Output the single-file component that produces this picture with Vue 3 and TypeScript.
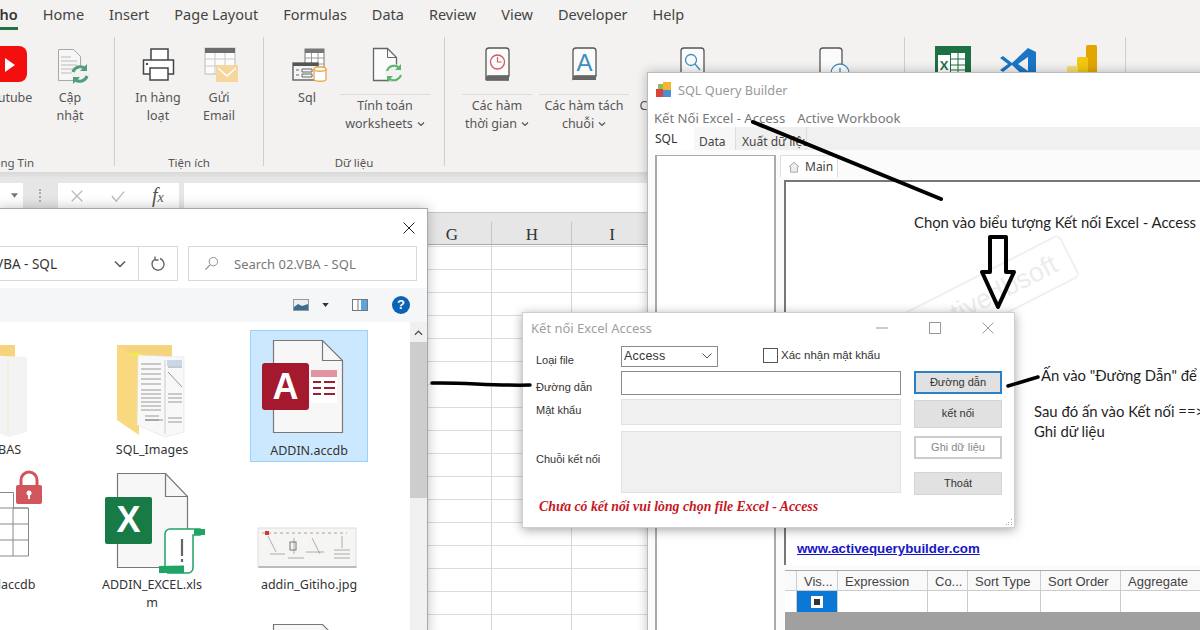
<script setup lang="ts">
const excelCols: string[] = ['G', 'H', 'I']
const gridHead: string[] = ['', 'Vis...', 'Expression', 'Co...', 'Sort Type', 'Sort Order', 'Aggregate']
</script>

<template>
  <div class="page">
    <div class="excel">
      <div class="tabs">
        <span class="tab tab-on">Gitiho</span>
        <span class="tab">Home</span>
        <span class="tab">Insert</span>
        <span class="tab">Page Layout</span>
        <span class="tab">Formulas</span>
        <span class="tab">Data</span>
        <span class="tab">Review</span>
        <span class="tab">View</span>
        <span class="tab">Developer</span>
        <span class="tab">Help</span>
      </div>
      <div class="ribbon">
        <div class="group g1">
          <div class="items">
            <div class="item w90">
              <svg class="ic" viewBox="0 0 50 45"><rect x="-6" y="2" width="53" height="36" rx="8" fill="#f40f0f"/><path d="M25 14l10 7-10 7z" fill="#fff"/></svg>
              <div class="lbl yt-lbl">Youtube</div>
            </div>
            <div class="item w40">
              <svg class="ic" viewBox="0 0 50 45"><path d="M13.500 5.500h15l7 7v24h-22z" fill="#f6f6f6" stroke="#a8a8a8"/><path d="M16 13h10M16 17h16M16 21h16M16 25h14M16 29h12" stroke="#bbb"/><circle cx="35" cy="30" r="8.500" fill="#f3f2f1"/><path d="M28 28a7.500 7.500 0 0 1 12-3.500M42 32a7.500 7.500 0 0 1-12 3.500" fill="none" stroke="#4f9e7c" stroke-width="3"/><path d="M42 20v7h-7zM28 40v-7h7z" fill="#4f9e7c"/></svg>
              <div class="lbl">Cập<br>nhật</div>
            </div>
          </div>
          <div class="gname gn1">Thông Tin</div>
        </div>
        <div class="group g2">
          <div class="items">
            <div class="item w60">
              <svg class="ic" viewBox="0 0 50 45"><path d="M18 16V5h17v11M18 30h-7.500V16h30v14H35" fill="#fff" stroke="#444" stroke-width="1.500"/><rect x="17" y="24" width="18" height="12" fill="#fff" stroke="#444" stroke-width="1.500"/><rect x="13" y="19" width="2" height="2" fill="#444"/></svg>
              <div class="lbl">In hàng<br>loạt</div>
            </div>
            <div class="item w60">
              <svg class="ic" viewBox="0 0 50 45"><rect x="11" y="4" width="30" height="26" fill="#fbfbfb" stroke="#bbb"/><rect x="11" y="4" width="30" height="5" fill="#6c6c6c"/><path d="M11 15h30M11 22h30M21 9v21M31 9v21" stroke="#c9c9c9"/><rect x="22" y="21" width="22" height="17" fill="#f6d69c"/><path d="M24 24l9 8 9-8" fill="none" stroke="#fff" stroke-width="1.500"/></svg>
              <div class="lbl">Gửi<br>Email</div>
            </div>
          </div>
          <div class="gname gn2">Tiện ích</div>
        </div>
        <div class="group g3">
          <div class="items">
            <div class="item w60">
              <svg class="ic" viewBox="0 0 50 45"><rect x="23" y="5" width="19" height="22" fill="#fff" stroke="#777"/><rect x="23" y="5" width="19" height="4" fill="#777"/><path d="M23 14h19M23 20h19M29.500 9v18M36 9v18" stroke="#999"/><rect x="11" y="19" width="25" height="17" fill="#f4f4f4" stroke="#555" stroke-width="1.300"/><rect x="11" y="19" width="25" height="3" fill="#555"/><path d="M14 26h3M14 31h3M20 25h10v3H20zM20 30h10v3H20z" fill="none" stroke="#666"/><path d="M32 25c0-3 12-3 12 0v10c0 3-12 3-12 0z" fill="#fff" stroke="#eea64a" stroke-width="1.300"/><path d="M32 25c0 3 12 3 12 0" fill="none" stroke="#eea64a" stroke-width="1.300"/></svg>
              <div class="lbl">Sql</div>
            </div>
            <div class="item w90">
              <svg class="ic" viewBox="0 0 50 45"><path d="M13.500 4.500h14l9 9v23h-23z" fill="#fbfbfb" stroke="#666" stroke-width="1.300"/><path d="M27.500 4.500v9h9" fill="none" stroke="#666"/><circle cx="34" cy="29" r="9" fill="#f3f2f1"/><path d="M27 27a7.500 7.500 0 0 1 12-3.500M41 31a7.500 7.500 0 0 1-12 3.500" fill="none" stroke="#5ab56a" stroke-width="2"/><path d="M41 20v6h-6zM27 38v-6h6z" fill="#5ab56a"/></svg>
              <div class="sep"></div>
              <div class="lbl">Tính toán<br>worksheets<svg class="chev" viewBox="0 0 8 6"><path d="M1 1.500l3 3 3-3" fill="none" stroke="#555" stroke-width="1.200"/></svg></div>
            </div>
          </div>
          <div class="gname gn2">Dữ liệu</div>
        </div>
        <div class="group g4">
          <div class="items">
            <div class="item w70">
              <svg class="ic" viewBox="0 0 50 45"><path d="M14 36V7a3 3 0 0 1 3-3h17a3 3 0 0 1 3 3v25H17a3 3 0 0 0-3 4zM14 36h23" fill="#fbfbfb" stroke="#555" stroke-width="1.300"/><rect x="14" y="32" width="23" height="4" fill="#666"/><circle cx="25.500" cy="18" r="7" fill="none" stroke="#cf5b63" stroke-width="1.300"/><path d="M25.500 13v5h4" fill="none" stroke="#cf5b63" stroke-width="1.200"/></svg>
              <div class="sep"></div>
              <div class="lbl">Các hàm<br>thời gian<svg class="chev" viewBox="0 0 8 6"><path d="M1 1.500l3 3 3-3" fill="none" stroke="#555" stroke-width="1.200"/></svg></div>
            </div>
            <div class="item w90">
              <svg class="ic" viewBox="0 0 50 45"><path d="M14 36V7a3 3 0 0 1 3-3h17a3 3 0 0 1 3 3v25H17a3 3 0 0 0-3 4z" fill="#fbfbfb" stroke="#555" stroke-width="1.300"/><rect x="14" y="32" width="23" height="4" fill="#666"/><text x="25.500" y="27" class="bookA">A</text></svg>
              <div class="sep"></div>
              <div class="lbl">Các hàm tách<br>chuỗi<svg class="chev" viewBox="0 0 8 6"><path d="M1 1.500l3 3 3-3" fill="none" stroke="#555" stroke-width="1.200"/></svg></div>
            </div>
            <div class="item w120">
              <svg class="ic" viewBox="0 0 50 45"><path d="M14 36V7a3 3 0 0 1 3-3h17a3 3 0 0 1 3 3v25H17a3 3 0 0 0-3 4z" fill="#fbfbfb" stroke="#555" stroke-width="1.300"/><circle cx="24" cy="16" r="5.500" fill="none" stroke="#3a8fc0" stroke-width="1.300"/><path d="M28 20l5 6" stroke="#3a8fc0" stroke-width="1.300"/></svg>
              <div class="sep short"></div>
              <div class="lbl">Các hàm tìm kiếm</div>
            </div>
            <div class="item w120">
              <svg class="ic" viewBox="0 0 50 45"><path d="M15 36V7a3 3 0 0 1 3-3h16a3 3 0 0 1 3 3v25" fill="#fbfbfb" stroke="#555" stroke-width="1.300"/><circle cx="35" cy="29" r="9" fill="#fff" stroke="#3a8fc0" stroke-width="1.300"/><path d="M35 24v5" stroke="#3a8fc0" stroke-width="1.300"/></svg>
            </div>
          </div>
        </div>
        <div class="group g5">
          <div class="items">
            <div class="item w50">
              <svg class="ic" viewBox="0 0 50 45"><rect x="8" y="2" width="36" height="42" fill="#1e7145"/><rect x="24" y="9" width="14" height="22" fill="#fff"/><path d="M31 9v22M24 15h14M24 21h14M24 26h14" stroke="#1e7145"/><rect x="11" y="11" width="12" height="20" fill="#fff"/><text x="17" y="26" class="xmark">X</text></svg>
            </div>
            <div class="item w50">
              <svg class="ic" viewBox="0 0 50 45"><path fill-rule="evenodd" d="M34 4L18 19 9 12l-3 2 8 6-8 6 3 2 9-7 16 15 8-4V8zM34 13v14L24 20z" fill="#1a76c4"/></svg>
            </div>
            <div class="item w50">
              <svg class="ic" viewBox="0 0 50 45"><rect x="31" y="1" width="11" height="40" rx="1.500" fill="#e3a600"/><rect x="22" y="13" width="11" height="30" rx="1.500" fill="#f2c811"/><rect x="12" y="22" width="11" height="20" rx="1.500" fill="#f6dc72"/></svg>
            </div>
          </div>
        </div>
      </div>

      <div class="fbar">
        <div class="namebox"><svg class="nbcaret" viewBox="0 0 8 5"><path d="M0 0h8L4 5z" fill="#777"/></svg></div>
        <div class="dots"></div>
        <div class="fxbox">
          <svg class="fxic" viewBox="0 0 16 16"><path d="M2 2l12 12M14 2L2 14" stroke="#bbb" stroke-width="1.500"/></svg>
          <svg class="fxic" viewBox="0 0 16 16"><path d="M1 8l5 6L15 3" fill="none" stroke="#bbb" stroke-width="1.500"/></svg>
          <span class="fx">f<small>x</small></span>
        </div>
        <div class="fbox"></div>
      </div>
      <div class="colhead">
        <div v-for="c in excelCols" :key="c" class="colcell">{{ c }}</div>
      </div>
      <div class="cells">
        <div v-for="c in excelCols" :key="c" class="cellcol"></div>
      </div>
    </div>

    <!-- File explorer window -->
    <section class="explorer">
      <div class="ex-title"><svg class="ex-x" viewBox="0 0 12 12"><path d="M.5.500l11 11M11.500.500l-11 11" stroke="#222" stroke-width="1"/></svg></div>
      <div class="ex-nav">
        <div class="ex-addr">
          <span class="ex-path">Excel &gt; 02.VBA - SQL</span>
          <svg class="ex-chev" viewBox="0 0 12 8"><path d="M1 1.500l5 5 5-5" fill="none" stroke="#555" stroke-width="1.500"/></svg>
          <div class="ex-ref"><svg viewBox="0 0 16 16" width="16" height="16"><path d="M5 3a6 6 0 1 0 5-.500M5 .500V4h3.500" fill="none" stroke="#666" stroke-width="1.400"/></svg></div>
        </div>
        <div class="ex-search">
          <svg viewBox="0 0 16 16" width="15" height="15"><circle cx="10" cy="6" r="4.500" fill="none" stroke="#888"/><path d="M6.500 9.500L1.500 14.500" stroke="#888" stroke-width="1.200"/></svg>
          <span>Search 02.VBA - SQL</span>
        </div>
      </div>
      <div class="ex-tools">
        <svg class="t-img" viewBox="0 0 16 12"><rect x=".5" y=".5" width="15" height="11" fill="#e8f0f5" stroke="#999"/><path d="M1 8l4-3 4 2 6-2v6H1z" fill="#3d6d8c"/></svg>
        <svg class="t-car" viewBox="0 0 8 5"><path d="M0 0h8L4 5z" fill="#333"/></svg>
        <svg class="t-pane" viewBox="0 0 16 12"><rect x=".5" y=".5" width="15" height="11" fill="#fff" stroke="#777"/><rect x="9" y="1" width="6" height="10" fill="#58a6dd"/><path d="M6 1v10" stroke="#777"/></svg>
        <span class="t-help">?</span>
      </div>
      <div class="ex-body">
        <div class="files">
          <div class="file">
            <svg class="fic" viewBox="0 0 118 109"><path d="M24 15h55v80H24z" fill="#f6d47e"/><path d="M45 25l46 2v75l-19 5-28-12z" fill="#f3f3f3"/><path d="M72 30v74M52 50l0 40M60 40l3 50" stroke="#f0ead6"/></svg>
            <div class="fname">VBA_BAS</div>
          </div>
          <div class="file">
            <svg class="fic" viewBox="0 0 118 109"><path d="M24 15h55v60H24z" fill="#f6d47e"/><path d="M24 15l22 14v76L24 90z" fill="#f8d980"/><path d="M34 23l12 6 10 0-8-6z" fill="#f3e84a"/><path d="M45 25l46 2v75l-19 5-28-12z" fill="#f8f8f8" stroke="#ddd" stroke-width=".5"/><path d="M72 30v74" stroke="#ccc"/><path d="M48 34h20M48 39h20M48 44h20M48 49h20M48 54h20M48 60h20M48 64h20M48 68h20M48 72h20M48 76h20M48 80h20M52 86h14M52 90h14M75 33h14M75 37h14M75 64h14M75 68h14M75 72h14M75 88h14M75 92h14" stroke="#8f8f8f" stroke-width=".9"/><path d="M75 42l14 15M52 90h18" stroke="#777" stroke-width=".8"/><rect x="74" y="30" width="15" height="6" fill="#c7d8ea"/></svg>
            <div class="fname">SQL_Images</div>
          </div>
          <div class="file sel">
            <svg class="fic" viewBox="0 0 118 109"><path d="M23.500 10.500h49l20 20v72h-69z" fill="#f7f7f7" stroke="#777" stroke-width="1.200"/><path d="M72.500 10.500v20h20" fill="none" stroke="#777" stroke-width="1.200"/><rect x="61" y="40" width="26" height="33" fill="#fff"/><rect x="61" y="40" width="26" height="7" fill="#e293a0"/><path d="M63 52h8M74 52h11M63 58h8M74 58h11M63 64h8M74 64h11" stroke="#9e1f32" stroke-width="1.800"/><rect x="12" y="33" width="47" height="47" rx="3" fill="#a4192d"/><text x="35.500" y="69" class="big">A</text></svg>
            <div class="fname">ADDIN.accdb</div>
          </div>
          <div class="file low">
            <svg class="fic" viewBox="0 0 118 109"><path d="M60 26.500h17.500v15.500h15v48H60z" fill="#fff" stroke="#888"/><path d="M60 42h32M60 58h32M60 74h32M77 42v48" stroke="#888"/><rect x="80" y="19" width="26" height="19" rx="2" fill="#d0565c"/><path d="M85 19v-5a8 8 0 0 1 16 0v5" fill="none" stroke="#d0565c" stroke-width="3"/><circle cx="93" cy="27" r="2.500" fill="#fff"/><rect x="92" y="27" width="2" height="6" fill="#fff"/></svg>
            <div class="fname">ADDIN.laccdb</div>
          </div>
          <div class="file low">
            <svg class="fic" viewBox="0 0 118 109"><path d="M24.500 7.500h48l22 23v71h-70z" fill="#f7f7f7" stroke="#777" stroke-width="1.200"/><path d="M72.500 7.500v23h22" fill="none" stroke="#777" stroke-width="1.200"/><rect x="12" y="31" width="47" height="47" rx="2" fill="#187a45"/><text x="35.500" y="66" class="big">X</text><path d="M72 100V68a5 5 0 0 1 5-5h30v6h-7v33a5 5 0 0 1-5 5H74" fill="#fff" stroke="#21a366" stroke-width="1.500"/><path d="M101 63h11v6h-11zM66 107v-7l25-.5V107z" fill="#21a366"/><path d="M89 73v17M89 93v3" stroke="#666" stroke-width="2.200"/></svg>
            <div class="fname">ADDIN_EXCEL.xlsm</div>
          </div>
          <div class="file low">
            <svg class="fic" viewBox="0 0 118 109"><rect x="8" y="62" width="98" height="39" fill="#f5f5f3" stroke="#ddd"/><rect x="8.500" y="100" width="98" height="2" fill="#bbb"/><path d="M12 67h85" stroke="#d8c9b8" stroke-width="2" stroke-dasharray="3 3"/><rect x="15" y="65" width="4" height="4" fill="#d33"/><path d="M18 70l8 16M44 72v16M62 72l8 16M92 70v12M20 88h15M38 92h16M56 86h18M84 84h16M84 88h16M84 92h16" stroke="#999" stroke-width=".8"/><rect x="40" y="76" width="6" height="8" fill="none" stroke="#777"/></svg>
            <div class="fname">addin_Gitiho.jpg</div>
          </div>
          <div class="file"></div>
          <div class="file"></div>
          <div class="file">
            <svg class="fic" viewBox="0 0 118 109"><path d="M23.500 .500h49l20 20v88h-69z" fill="#f7f7f7" stroke="#777" stroke-width="1.200"/></svg>
          </div>
        </div>
        <div class="scroll">
          <svg class="sc-up" viewBox="0 0 10 6"><path d="M1 5l4-4 4 4" fill="none" stroke="#555" stroke-width="1.500"/></svg>
          <div class="sc-thumb"></div>
        </div>
      </div>
    </section>

    <!-- SQL Query Builder window -->
    <section class="sql">
      <div class="sq-title">
        <svg viewBox="0 0 16 16" width="16" height="16"><rect x="0" y="7" width="7" height="8" fill="#d8443a"/><rect x="7" y="0" width="8" height="8" fill="#f3b632"/><rect x="7" y="8" width="8" height="7" fill="#4c8fd2"/><rect x="2" y="2" width="5" height="5" fill="#8abf5c"/></svg>
        <span>SQL Query Builder</span>
      </div>
      <div class="sq-menu"><span>Kết Nối Excel - Access</span><span>Active Workbook</span></div>
      <div class="sq-tabs">
        <span class="st st-on">SQL</span>
        <span class="st st-data">Data</span>
        <span class="st st-out">Xuất dữ liệu</span>
      </div>
      <div class="sq-body">
        <div class="sq-left"></div>
        <div class="sq-main">
          <div class="main-tab">
            <svg viewBox="0 0 14 14" width="12" height="12"><path d="M1 7l6-5.500L13 7M3 6.500V13h8V6.500" fill="#eee" stroke="#999"/></svg>
            <span>Main</span>
          </div>
          <div class="canvas">
            <div class="mark"><span>Activedbsoft</span></div>
            <a class="link">www.activequerybuilder.com</a>
          </div>
          <div class="qgrid">
            <div class="qrow qhead">
              <div v-for="h in gridHead" :key="h" class="qc">{{ h }}</div>
            </div>
            <div class="qrow qdata">
              <div v-for="h in gridHead" :key="h" class="qc"></div>
            </div>
          </div>
          <div class="qrest"></div>
        </div>
      </div>
    </section>

    <!-- Connection dialog -->
    <section class="dlg">
      <div class="dl-title">
        <span>Kết nối Excel Access</span>
        <div class="dl-ctl">
          <svg viewBox="0 0 12 12" width="12" height="12"><path d="M0 6h12" stroke="#999"/></svg>
          <svg viewBox="0 0 12 12" width="12" height="12"><rect x=".5" y=".5" width="11" height="11" fill="none" stroke="#999"/></svg>
          <svg viewBox="0 0 12 12" width="12" height="12"><path d="M.5.500l11 11M11.500.500l-11 11" stroke="#999"/></svg>
        </div>
      </div>
      <div class="dl-form">
        <label class="l1">Loại file</label>
        <div class="dl-top">
          <div class="select"><span>Access</span><svg viewBox="0 0 10 6" width="10" height="6"><path d="M.5.500l4.500 4.500 4.500-4.500" fill="none" stroke="#555"/></svg></div>
          <div class="check"><i></i><span>Xác nhận mật khẩu</span></div>
        </div>
        <label class="l2">Đường dẫn</label>
        <div class="input"></div>
        <label class="l3">Mật khẩu</label>
        <div class="input off"></div>
        <label class="l4">Chuỗi kết nối</label>
        <div class="input off area"></div>
        <div class="dl-btns">
          <button class="b1">Đường dẫn</button>
          <button class="b2">kết nối</button>
          <button class="b3">Ghi dữ liệu</button>
          <button class="b4">Thoát</button>
        </div>
      </div>
      <div class="dl-msg">Chưa có kết nối vui lòng chọn file Excel - Access</div>
      <svg class="grip" viewBox="0 0 8 8"><path d="M6 1h1v1H6zM3 4h1v1H3zM6 4h1v1H6zM1 6h1v1H1zM3 6h1v1H3zM6 6h1v1H6z" fill="#aaa"/></svg>
    </section>

    <!-- Annotations drawn over the screenshot -->
    <svg class="ann" viewBox="0 0 1200 630">
      <path d="M753 122L941 199" stroke="#000" stroke-width="4" stroke-linecap="round"/>
      <path d="M990 237h16v35h8l-16 35-16-35h8z" fill="none" stroke="#000" stroke-width="4" stroke-linejoin="round"/>
      <path d="M432 383c30-1 60 3 98 2" fill="none" stroke="#000" stroke-width="3.500" stroke-linecap="round"/>
      <path d="M1008 386L1038 377" stroke="#000" stroke-width="3.500" stroke-linecap="round"/>
    </svg>
    <div class="note n1">Chọn vào biểu tượng Kết nối Excel - Access</div>
    <div class="note n2">Ấn vào "Đường Dẫn" để</div>
    <div class="note n3">Sau đó ấn vào Kết nối ==&gt;<br>Ghi dữ liệu</div>
  </div>
</template>

<style>
html, body { margin: 0; padding: 0; background: #fff; }
</style>

<style scoped>
.page {
  position: relative;
  width: 1200px;
  height: 630px;
  overflow: hidden;
  background: #fff;
  font-family: "Noto Sans", "Open Sans", sans-serif;
}

/* Excel */
.excel { display: flex; flex-direction: column; height: 630px; width: 1200px; }
.tabs {
  height: 33px;
  box-sizing: border-box;
  background: #f3f2f1;
  display: flex;
  gap: 25px;
  margin-left: -25px;
  font-size: 14.5px;
  color: #444;
  line-height: 29px;
}
.tab { height: 30px; white-space: nowrap; }
.tab-on { border-bottom: 3px solid #217346; box-sizing: border-box; font-weight: 600; color: #333; }

.ribbon {
  height: 139px;
  box-sizing: border-box;
  background: #f3f2f1;
  padding-top: 4px;
  display: flex;
  margin-left: -40px;
  width: 1240px;
}
.group {
  height: 129px;
  box-sizing: border-box;
  border-right: 1px solid #cfcfcf;
  display: flex;
  flex-direction: column;
  padding-top: 7px;
  flex: none;
}
.g1 { width: 155px; }
.g2 { width: 149px; padding-left: 13px; }
.g2 .items { gap: 1px; }
.g3 { width: 181px; padding-left: 13px; }
.g3 .items { gap: 3px; }
.g4 { width: 460px; padding-left: 17px; }
.g4 .items { gap: 7px; }
.g4 .w120 { margin-left: -4px; }
.g4 .w120 + .w120 { margin-left: 11px; }
.g5 { width: 221px; padding-left: 22px; }
.g5 .items { gap: 17px; }
.g5 .item + .item + .item { margin-left: -6px; }
.items { display: flex; flex: 1; min-height: 0; }
.item { display: flex; flex-direction: column; align-items: center; flex: none; }
.w40 { width: 40px; } .w50 { width: 50px; } .w60 { width: 60px; }
.w70 { width: 70px; } .w90 { width: 90px; } .w120 { width: 120px; }
.ic { width: 50px; height: 45px; overflow: visible; flex: none; }
.lbl { font-size: 12.5px; line-height: 18px; color: #555; text-align: center; white-space: nowrap; }
.yt-lbl { margin-left: 6px; }
.sep { width: 100%; border-top: 1px solid #dcdcdc; margin: 5px 0 2px; }
.sep.short { width: 66%; }
.chev { width: 8px; height: 6px; margin-left: 4px; vertical-align: 1px; }
.gname { font-size: 11.5px; line-height: 14px; height: 14px; color: #555; text-align: center; margin-bottom: -4px; }
.gn1 { padding-right: 60px; }
.gn2 { margin-left: -13px; }
.bookA { font: 400 24px "Liberation Sans", sans-serif; fill: #3a8fc0; text-anchor: middle; }
.xmark { font: 700 13px "Liberation Sans", sans-serif; fill: #1e7145; text-anchor: middle; }

.fbar {
  height: 40px;
  box-sizing: border-box;
  background: linear-gradient(#d8d8d8, #e6e6e6 6px);
  padding-top: 11px;
  display: flex;
  width: 1200px;
}
.namebox { width: 23px; height: 25px; background: #fff; display: flex; align-items: center; justify-content: flex-end; padding-right: 5px; box-sizing: border-box; flex: none; }
.nbcaret { width: 7px; height: 5px; }
.dots { width: 2px; height: 13px; margin: 6px 16px 0 16px; border-left: 2px dotted #aaa; flex: none; }
.fxbox { width: 121px; height: 25px; background: #fff; display: flex; align-items: center; gap: 27px; padding-left: 12px; box-sizing: border-box; flex: none; margin-left: -1px; }
.fxic { width: 14px; height: 14px; flex: none; }
.fx { font: italic 20px "Liberation Serif", serif; color: #555; }
.fx small { font-size: 14px; }
.fbox { flex: 1; height: 29px; background: #fff; margin-left: 5px; }

.colhead {
  height: 33px;
  box-sizing: border-box;
  background: #e6e6e6;
  border-top: 1px solid #c8c8c8;
  border-bottom: 1px solid #aaa;
  display: flex;
  padding-left: 412px;
  flex: none;
}
.colcell {
  width: 80px;
  box-sizing: border-box;
  background: linear-gradient(#c4c4c4, #c4c4c4) right bottom / 1px 22px no-repeat;
  font: 400 17px/20px "Liberation Serif", serif;
  color: #333;
  text-align: center;
  padding-top: 12px;
}
.cells {
  flex: 1;
  display: flex;
  padding-left: 412px;
  background: linear-gradient(#fff 22px, #dcdcdc 22px) 0 2px / 100% 23px;
}
.cellcol { width: 80px; box-sizing: border-box; border-right: 1px solid #d8d8d8; }

/* Explorer */
.explorer {
  position: absolute;
  left: -2px;
  top: 208px;
  width: 430px;
  height: 430px;
  box-sizing: border-box;
  background: #fff;
  border: 1px solid #a8a8a8;
  box-shadow: 0 0 12px rgba(0, 0, 0, .25);
  display: flex;
  flex-direction: column;
  color: #333;
}
.ex-title { height: 37px; display: flex; justify-content: flex-end; align-items: center; padding-right: 12px; flex: none; box-sizing: border-box; }
.ex-x { width: 12px; height: 12px; }
.ex-nav { display: flex; height: 35px; gap: 10px; flex: none; margin-left: -40px; padding-right: 10px; }
.ex-addr { width: 219px; box-sizing: border-box; border: 1px solid #d9d9d9; display: flex; align-items: center; justify-content: flex-end; font-size: 13.5px; color: #333; flex: none; }
.ex-path { white-space: nowrap; margin-right: 57px; }
.ex-chev { width: 12px; height: 8px; margin-right: 12px; flex: none; }
.ex-ref { width: 38px; height: 33px; border-left: 1px solid #d9d9d9; display: flex; align-items: center; justify-content: center; flex: none; }
.ex-search { flex: 1; box-sizing: border-box; border: 1px solid #d9d9d9; display: flex; align-items: center; gap: 15px; padding-left: 15px; font-size: 13px; color: #777; }
.ex-tools { margin-top: 7px; height: 34px; background: #f5f6f7; display: flex; align-items: center; flex: none; justify-content: flex-end; padding-right: 17px; box-sizing: border-box; }
.t-img { width: 16px; height: 12px; }
.t-car { width: 7px; height: 4px; margin-left: 13px; }
.t-pane { width: 16px; height: 12px; margin-left: 23px; }
.t-help { width: 18px; height: 18px; border-radius: 50%; background: #0b63b6; color: #fff; font: 700 13px/18px "Liberation Sans", sans-serif; text-align: center; margin-left: 24px; }
.ex-body { flex: 1; display: flex; min-height: 0; }
.files {
  flex: none;
  width: 474px;
  margin-left: -63px;
  padding-top: 8px;
  box-sizing: border-box;
  overflow: hidden;
  display: grid;
  grid-template-columns: repeat(3, 118px);
  grid-template-rows: 132px 154px 120px;
  column-gap: 39px;
  row-gap: 4px;
  align-content: start;
}
.file { box-sizing: border-box; text-align: center; min-width: 0; }
.sel { background: #cce8ff; border: 1px solid #99d1ff; }
.sel .fic { margin: -1px 0 0 -1px; }
.sel .fname { padding-top: 3px; }
.low .fname { padding-top: 1px; }
.fic { display: block; width: 118px; height: 109px; overflow: visible; }
.fname { font-size: 12.5px; line-height: 18px; color: #333; word-break: break-all; padding: 2px 6px 0; }
.big { font: 700 36px "Liberation Sans", sans-serif; fill: #fff; text-anchor: middle; }
.scroll { width: 17px; background: #f0f0f0; display: flex; flex-direction: column; align-items: center; flex: none; }
.sc-up { width: 9px; height: 6px; margin-top: 8px; }
.sc-thumb { width: 17px; height: 156px; background: #cdcdcd; margin-top: 6px; }

/* SQL Query Builder */
.sql {
  position: absolute;
  left: 647px;
  top: 72px;
  width: 570px;
  height: 570px;
  box-sizing: border-box;
  background: #fff;
  border-top: 1px solid #bbb;
  border-left: 1px solid #bbb;
  box-shadow: 0 0 10px rgba(0, 0, 0, .25);
  display: flex;
  flex-direction: column;
  color: #555;
}
.sq-title { height: 33px; display: flex; align-items: center; gap: 6px; padding-left: 8px; color: #999; font-size: 12.7px; flex: none; }
.sq-menu { height: 21px; box-sizing: border-box; padding: 3px 0 0 6px; display: flex; gap: 12px; align-items: center; color: #777; font-size: 13.100px; flex: none; }
.sq-tabs { height: 23px; background: #f0f0f0; display: flex; flex: none; font-size: 12px; color: #444; line-height: 29px; }
.st { display: block; box-sizing: border-box; white-space: nowrap; overflow: hidden; }
.st-on { width: 46px; background: #fff; padding-left: 7px; line-height: 24px; color: #333; }
.st-data { width: 41px; background: #f7f7f7; padding-left: 5px; }
.st-out { width: 72px; border-left: 1px solid #ddd; border-right: 1px solid #ddd; padding-left: 6px; }
.sq-body { flex: 1; display: flex; min-height: 0; padding: 5px 0 0 7px; background: #fbfbfb; }
.sq-left { width: 121px; flex: none; box-sizing: border-box; background: #fff; border: 1px solid #aaa; border-width: 1px 2px 0 2px; }
.sq-main { flex: 1; margin-left: 4px; display: flex; flex-direction: column; min-width: 0; }
.main-tab { height: 22px; width: 58px; background: #fff; box-sizing: border-box; border: 1px solid #ddd; border-bottom: 0; display: flex; align-items: center; gap: 5px; padding-left: 7px; font-size: 12px; color: #444; flex: none; }
.canvas {
  position: relative;
  height: 385px;
  margin: 3px 0 0 4px;
  box-sizing: border-box;
  border-top: 2px solid #777;
  border-left: 2px solid #777;
  background: #fff;
  flex: none;
  display: flex;
  align-items: flex-end;
  padding: 0 0 7px 11px;
  overflow: hidden;
}
.mark {
  position: absolute;
  left: 38px;
  top: 108px;
  width: 260px;
  height: 48px;
  box-sizing: border-box;
  border: 2px solid #f0f0f0;
  border-radius: 6px;
  transform: rotate(-27deg);
  text-align: right;
  padding-right: 14px;
  font: 400 27px/44px "Liberation Sans", sans-serif;
  color: #ececec;
}
.link { position: relative; font: 700 13.300px/18px "Liberation Sans", sans-serif; color: #1616c4; text-decoration: underline; }
.qgrid { margin: 5px 0 0 5px; border-top: 1px solid #aaa; flex: none; background: #fff; }
.qrow { display: grid; grid-template-columns: 12px 41px 90px 40px 73px 80px 1fr; }
.qc { box-sizing: border-box; border-right: 1px solid #ccc; border-bottom: 1px solid #ccc; padding-left: 7px; white-space: nowrap; overflow: hidden; font: 400 13px/21px "Liberation Sans", sans-serif; color: #444; }
.qhead .qc { height: 20px; background: #f9f9f9; }
.qdata .qc { height: 21px; border-bottom: 0; position: relative; }
.qdata .qc:nth-child(2) { background: #0a78d4; }
.qdata .qc:nth-child(2)::after {
  content: "";
  position: absolute;
  left: 14px;
  top: 5px;
  width: 6px;
  height: 6px;
  background: #333;
  border: 3px solid #fff;
}
.qrest { flex: 1; margin-left: 5px; background: #a0a0a0; }

/* Dialog */
.dlg {
  position: absolute;
  left: 522px;
  top: 312px;
  width: 493px;
  height: 216px;
  box-sizing: border-box;
  background: #fff;
  border: 1px solid #cfcfcf;
  box-shadow: 0 2px 10px rgba(0, 0, 0, .35);
  font: 400 11px "Liberation Sans", sans-serif;
  color: #333;
}
.dl-title { height: 33px; display: flex; justify-content: space-between; align-items: center; padding: 0 20px 4px 8px; font: 400 13px "Noto Sans", sans-serif; color: #a0a0a0; box-sizing: border-box; }
.dl-ctl { display: flex; gap: 41px; align-items: center; }
.dl-form {
  display: grid;
  grid-template-columns: 72px 280px 88px;
  grid-template-rows: 22px 24px 26px 62px;
  column-gap: 13px;
  row-gap: 3px;
  padding-left: 13px;
}
label { display: block; white-space: nowrap; font-size: 11px; }
.l1 { padding-top: 8px; }
.l2 { padding-top: 10px; }
.l3 { padding-top: 6px; }
.l4 { padding-top: 26px; }
.dl-top { display: flex; align-items: flex-start; }
.select { width: 97px; height: 21px; box-sizing: border-box; border: 1px solid #8a8a8a; display: flex; align-items: center; justify-content: space-between; padding: 0 5px 2px 2px; font-size: 12.5px; letter-spacing: .2px; flex: none; }
.check { display: flex; align-items: center; gap: 3px; margin: 2px 0 0 45px; line-height: 14px; white-space: nowrap; font-size: 11.500px; }
.check i { width: 13px; height: 13px; border: 1px solid #555; display: block; flex: none; }
.check span { margin-top: -2px; }
.input { height: 24px; box-sizing: border-box; border: 1px solid #8a8a8a; background: #fff; grid-column: 2; }
.input.off { height: 26px; background: #f0f0f0; border-color: #e2e2e2; margin-top: 1px; }
.input.area { height: 62px; margin-top: 4px; }
.dl-btns { grid-column: 3; grid-row: 1 / 5; padding-top: 25px; display: flex; flex-direction: column; }
button { display: block; width: 88px; box-sizing: border-box; font: inherit; font-size: 11px; color: #333; background: #e1e1e1; border: 1px solid #d4d4d4; padding: 0 0 2px; flex: none; }
.b1 { height: 23px; border: 2px solid #2b80c5; }
.b2 { height: 28px; margin-top: 6px; }
.b3 { height: 23px; margin-top: 8px; background: #fff; border: 2px solid #ccc; color: #888; }
.b4 { height: 23px; margin-top: 13px; }
.dl-msg { font: italic 700 13.800px "Liberation Serif", serif; color: #c8161d; padding-left: 16px; margin-top: 10px; white-space: nowrap; }
.grip { position: absolute; right: 1px; bottom: 1px; width: 8px; height: 8px; }

/* Annotations */
.ann { position: absolute; inset: 0; width: 1200px; height: 630px; pointer-events: none; }
.note { position: absolute; font: 400 14.850px/20px Lato, "Noto Sans", sans-serif; color: #1f1f1f; white-space: nowrap; }
.n1 { left: 914px; top: 212px; }
.n2 { left: 1041px; top: 365px; }
.n3 { left: 1034px; top: 401px; }
</style>
